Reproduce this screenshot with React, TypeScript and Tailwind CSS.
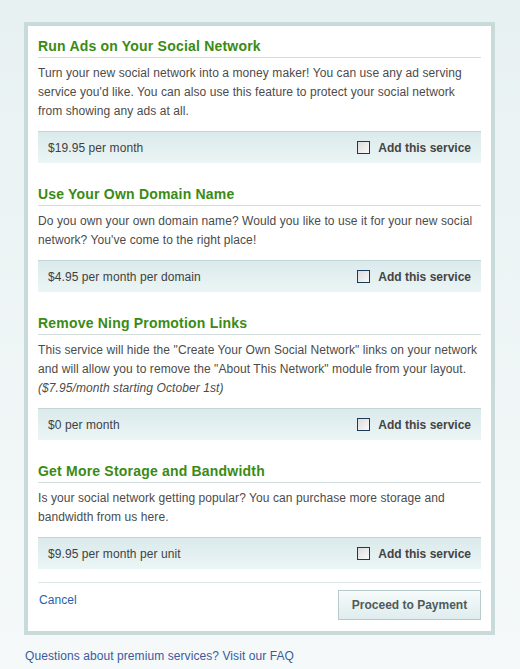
const SERVICES = [
  {
    title: "Run Ads on Your Social Network",
    lines: [
      "Turn your new social network into a money maker! You can use any ad serving",
      "service you'd like. You can also use this feature to protect your social network",
      "from showing any ads at all.",
    ],
    note: null as string | null,
    price: "$19.95 per month",
  },
  {
    title: "Use Your Own Domain Name",
    lines: [
      "Do you own your own domain name? Would you like to use it for your new social",
      "network? You've come to the right place!",
    ],
    note: null,
    price: "$4.95 per month per domain",
  },
  {
    title: "Remove Ning Promotion Links",
    lines: [
      "This service will hide the \"Create Your Own Social Network\" links on your network",
      "and will allow you to remove the \"About This Network\" module from your layout.",
    ],
    note: "($7.95/month starting October 1st)",
    price: "$0 per month",
  },
  {
    title: "Get More Storage and Bandwidth",
    lines: [
      "Is your social network getting popular? You can purchase more storage and",
      "bandwidth from us here.",
    ],
    note: null,
    price: "$9.95 per month per unit",
  },
];

export default function App() {
  return (
    <div
      className="min-h-[669px] w-[520px] bg-gradient-to-b from-[#e8f1f2] to-[#f5f9f9] pl-[24px] pt-[22px] text-[12px] tracking-[0.08px] text-[#444]"
      style={{ fontFamily: '"Liberation Sans", Arial, sans-serif' }}
    >
      <div className="w-[471px] border-4 border-[#c9dada] bg-white px-[10px] pb-[11px] pt-[11px]">
        {SERVICES.map((s, i) => (
          <div key={s.title} className={i > 0 ? "mt-[22px]" : ""}>
            <h2 className="border-b border-[#d3dfdf] pb-[2px] text-[14px] font-bold leading-[18px] tracking-[0.2px] text-[#3a8b13]">
              {s.title}
            </h2>
            <div className="mt-[6px] leading-[19px] text-[#4b4b4b]">
              {s.lines.map((l) => (
                <div key={l} className="whitespace-nowrap">
                  {l}
                </div>
              ))}
              {s.note && <div className="italic">{s.note}</div>}
            </div>
            <div className="mt-[10px] flex h-[32px] items-center justify-between border-t border-[#c3d4d5] bg-gradient-to-b from-[#dbeaec] to-[#ebf5f5] px-[10px]">
              <span className="text-[#3f3f3f]">{s.price}</span>
              <label className="flex items-center gap-[8px] font-bold tracking-normal text-[#444]">
                <span className="h-[13px] w-[13px] border border-[#1f3a57] bg-gradient-to-br from-[#dcdcdc] to-[#fafafa]" />
                Add this service
              </label>
            </div>
          </div>
        ))}
        <div className="mt-[13px] flex items-start justify-between border-t border-[#dde7e7] pt-[7px]">
          <a className="mt-[3px] pl-px leading-[15px] text-[#1f5fae]">Cancel</a>
          <button className="h-[30px] w-[143px] border border-[#b9caca] bg-gradient-to-b from-[#f7fbfb] to-[#dfeced] text-[12px] font-bold tracking-normal text-[#4f5b5b]">
            Proceed to Payment
          </button>
        </div>
      </div>
      <p className="mt-[14px] pl-px leading-[15px] text-[#3a5aa2]">
        Questions about premium services? Visit our FAQ
      </p>
    </div>
  );
}
